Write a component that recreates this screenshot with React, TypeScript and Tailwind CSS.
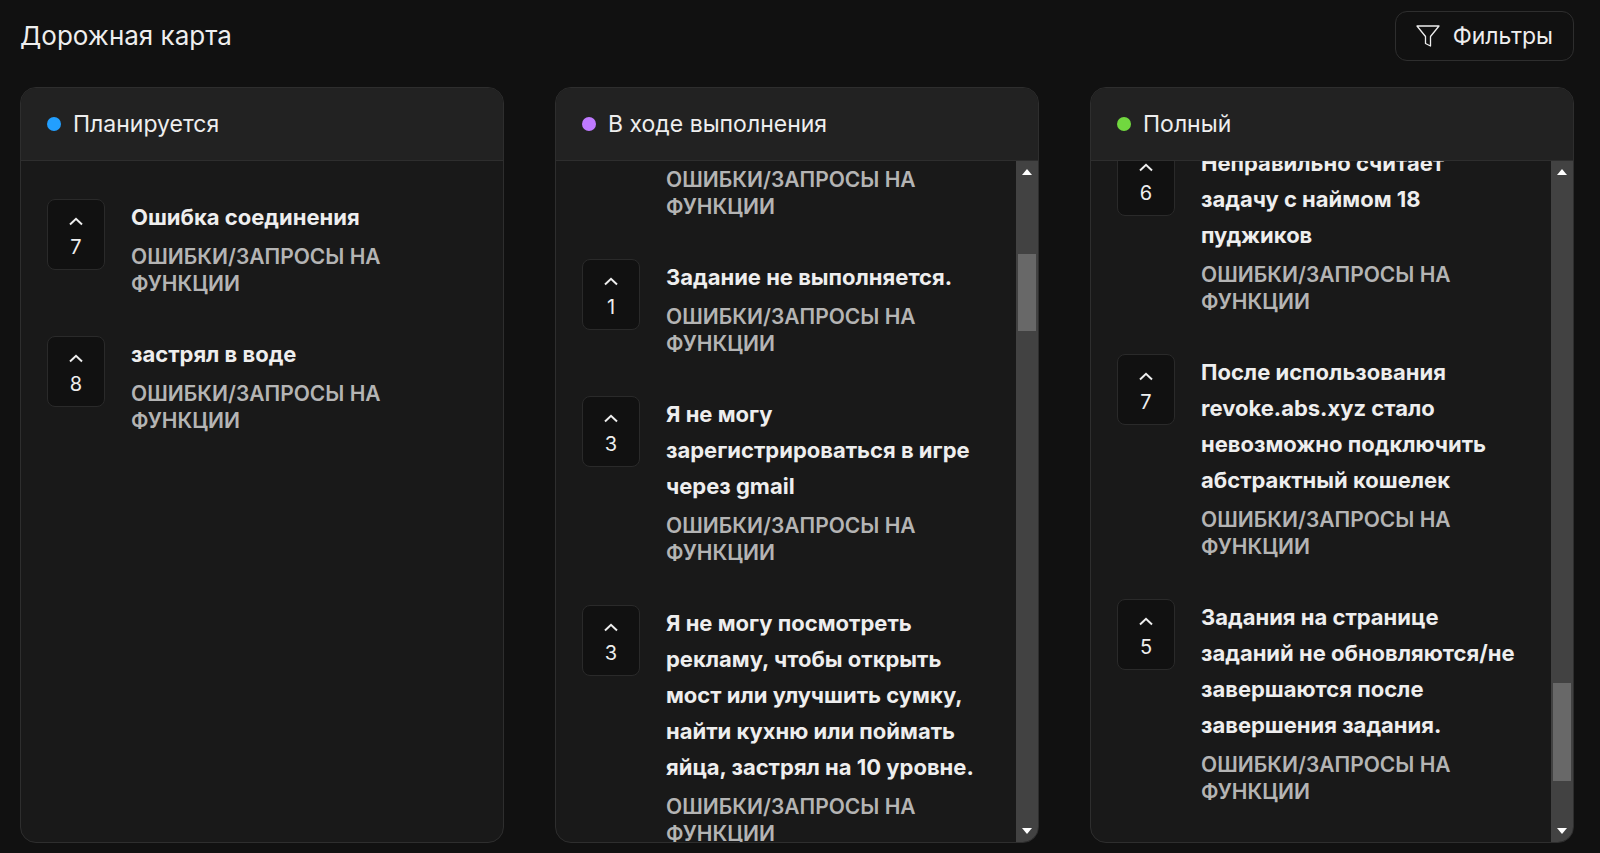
import { useLayoutEffect, useRef } from 'react'

type Post = {
    votes: number
    title: string
}

type ColumnData = {
    name: string
    dot: string
    scrollTop: number
    thumb?: { before: number; size: number; after: number }
    posts: Post[]
}

const columns: ColumnData[] = [
    {
        name: 'Планируется',
        dot: 'bg-[#229fff]',
        scrollTop: 0,
        posts: [
            { votes: 7, title: 'Ошибка соединения' },
            { votes: 8, title: 'застрял в воде' },
        ],
    },
    {
        name: 'В ходе выполнения',
        dot: 'bg-[#bf7aff]',
        scrollTop: 113,
        thumb: { before: 71, size: 77, after: 489 },
        posts: [
            { votes: 2, title: 'Не работает вход после обновления' },
            { votes: 1, title: 'Задание не выполняется.' },
            { votes: 3, title: 'Я не могу зарегистрироваться в игре через gmail' },
            { votes: 3, title: 'Я не могу посмотреть рекламу, чтобы открыть мост или улучшить сумку, найти кухню или поймать яйца, застрял на 10 уровне.' },
        ],
    },
    {
        name: 'Полный',
        dot: 'bg-[#71d83f]',
        scrollTop: 54,
        thumb: { before: 500, size: 98, after: 39 },
        posts: [
            { votes: 6, title: 'Неправильно считает задачу с наймом 18 пуджиков' },
            { votes: 7, title: 'После использования revoke.abs.xyz стало невозможно подключить абстрактный кошелек' },
            { votes: 5, title: 'Задания на странице заданий не обновляются/не завершаются после завершения задания.' },
        ],
    },
]

function PostRow({ post }: { post: Post }) {
    return (
        <li className="flex items-start gap-[26px]">
            <button className="flex h-[71px] w-[58px] shrink-0 flex-col items-center justify-center gap-[7px] rounded-lg border border-[#2a2a2a] bg-[#111111] text-xl leading-7 text-[#eeeeee]">
                <svg className="mt-2" width="14" height="9" viewBox="0 0 14 9" fill="none" stroke="currentColor" strokeWidth="2">
                    <path d="M1 7.5 7 1.8l6 5.7" />
                </svg>
                {post.votes}
            </button>
            <div className="min-w-0 flex-1">
                <h3 className="text-[22px] leading-9 font-bold text-[#eeeeee]">{post.title}</h3>
                <p className="mt-2 text-[21px] leading-[27px] font-semibold text-[#b4b4b4] uppercase">Ошибки/запросы на функции</p>
            </div>
        </li>
    )
}

function Scrollbar({ before, size, after }: { before: number; size: number; after: number }) {
    return (
        <div className="flex w-[22px] shrink-0 flex-col bg-[#424242]" aria-hidden="true">
            <div className="flex h-[22px] items-center justify-center">
                <svg width="10" height="6" viewBox="0 0 10 6" fill="#ffffff"><path d="M0 6 5 0l5 6z" /></svg>
            </div>
            <div className="flex flex-1 flex-col px-[2px]">
                <div style={{ flexGrow: before }} />
                <div className="bg-[#686868]" style={{ flexGrow: size }} />
                <div style={{ flexGrow: after }} />
            </div>
            <div className="flex h-[22px] items-center justify-center">
                <svg width="10" height="6" viewBox="0 0 10 6" fill="#ffffff"><path d="M0 0 5 6l5-6z" /></svg>
            </div>
        </div>
    )
}

function Column({ column }: { column: ColumnData }) {
    const listRef = useRef<HTMLUListElement>(null)

    useLayoutEffect(() => {
        if (listRef.current) listRef.current.scrollTop = column.scrollTop
    }, [column.scrollTop])

    return (
        <section className="flex min-h-0 flex-col overflow-hidden rounded-2xl border border-[#2e2e2e] bg-[#191919]">
            <header className="flex h-[73px] shrink-0 items-center gap-3 border-b border-[#2e2e2e] bg-[#222222] px-[26px]">
                <span className={`size-[14px] rounded-full ${column.dot}`} />
                <h2 className="text-[23px] leading-8 text-[#eeeeee]">{column.name}</h2>
            </header>
            <div className="flex min-h-0 flex-1">
                <ul ref={listRef} className="flex min-w-0 flex-1 flex-col gap-[39px] overflow-y-auto px-[26px] pt-[38px] pb-12 [scrollbar-width:none]">
                    {column.posts.map((post, index) => (
                        <PostRow key={index} post={post} />
                    ))}
                </ul>
                {column.thumb && <Scrollbar {...column.thumb} />}
            </div>
        </section>
    )
}

export default function App() {
    return (
        <div className="flex h-screen flex-col bg-[#111111] pt-[11px] pr-[26px] pb-[10px] pl-5 font-['Inter','Noto_Sans',sans-serif]">
            <div className="flex items-center justify-between">
                <h1 className="text-[26px] leading-9 text-[#eeeeee]">Дорожная карта</h1>
                <button className="flex h-[50px] items-center gap-[13px] rounded-xl border border-[#2e2e2e] px-5 text-[23px] text-[#eeeeee]">
                    <svg width="24" height="22" viewBox="0 0 24 22" fill="none" stroke="currentColor" strokeWidth="1.3" strokeLinejoin="round">
                        <path d="M1 1h22l-8.5 10.5v9.5l-5-2.5v-7z" />
                    </svg>
                    Фильтры
                </button>
            </div>
            <main className="mt-[26px] grid min-h-0 flex-1 grid-cols-3 gap-[51px]">
                {columns.map((column) => (
                    <Column key={column.name} column={column} />
                ))}
            </main>
        </div>
    )
}
